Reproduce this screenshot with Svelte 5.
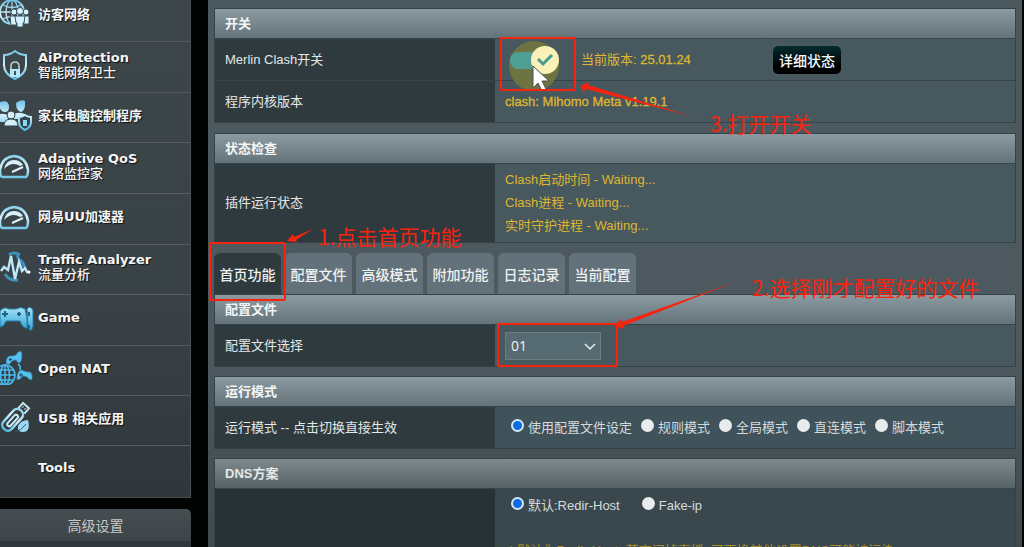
<script lang="ts">
  // Menu lateral
  const menu = [
    { icon: 'guest', title: '访客网络' },
    { icon: 'shield', title: 'AiProtection', sub: '智能网络卫士' },
    { icon: 'family', title: '家长电脑控制程序' },
    { icon: 'gauge', title: 'Adaptive QoS', sub: '网络监控家' },
    { icon: 'gauge', title: '网易UU加速器' },
    { icon: 'traffic', title: 'Traffic Analyzer', sub: '流量分析' },
    { icon: 'game', title: 'Game' },
    { icon: 'nat', title: 'Open NAT' },
    { icon: 'usb', title: 'USB 相关应用' },
    { icon: '', title: 'Tools' }
  ];

  const tabs = ['首页功能', '配置文件', '高级模式', '附加功能', '日志记录', '当前配置'];
  const modes = ['使用配置文件设定', '规则模式', '全局模式', '直连模式', '脚本模式'];
  const dnsModes = ['默认:Redir-Host', 'Fake-ip'];
  const status = ['Clash启动时间 - Waiting...', 'Clash进程 - Waiting...', '实时守护进程 - Waiting...'];

  let activeTab = $state('首页功能');
  let enabled = $state(true);
  let profile = $state('01');
  let mode = $state('使用配置文件设定');
  let dns = $state('默认:Redir-Host');
</script>

<div class="page">
  <aside>
    <nav class="menu">
      {#each menu as item}
        <a class="item" href="#menu">
          <svg class="icon" viewBox="0 0 34 34" fill="none" stroke="url(#ice)" stroke-width="2" aria-hidden="true">
            {#if item.icon === 'guest'}
              <circle cx="12" cy="14" r="12" />
              <path d="M12 2v24M0 14h24M3 7q9 5 18 0M3 21q9-5 18 0" stroke-width="1.3" />
              <ellipse cx="12" cy="14" rx="6" ry="12" stroke-width="1.3" />
              <g fill="#d6f1fb" stroke="#36535e" stroke-width="1">
                <circle cx="14" cy="14" r="3" /><path d="M10 18h7v9h-6z" />
                <circle cx="26" cy="14" r="3" /><path d="M23 18h6v8h-6z" />
                <circle cx="20" cy="13" r="3.5" /><path d="M15 18h10l-1 7h-1v4h-6v-4h-1z" />
              </g>
            {:else if item.icon === 'shield'}
              <path d="M15 3q5 4 11 4v10q0 9-11 14Q4 26 4 17V7q6 0 11-4z" />
              <path d="M11 22v-4q0-4 4-4t4 4v4" stroke="#b7cdd5" stroke-width="1.6" />
              <rect x="10" y="21" width="10" height="8" fill="#b9e6f7" stroke="none" />
              <path d="M15 23v4" stroke="#35525f" />
            {:else if item.icon === 'family'}
              <g fill="url(#ice)" stroke="none">
                <path d="M0 4q9-3 9 5 0 5-4 5T0 10zM16 5q5-4 9-2 1 9-4 11-5-1-5-9z" />
                <path d="M0 16q6-1 8 2v6H0zM14 16q7-3 12 1v4H14z" />
              </g>
              <g fill="#d5eef7" stroke="#35454c" stroke-width="1">
                <circle cx="11" cy="17" r="4" /><path d="M4 28q0-7 7-7t7 7z" />
              </g>
              <path d="M25 17q3 2 6 2v5q0 5-6 8-6-3-6-8v-5q3 0 6-2z" fill="#32444c" />
              <rect x="23" y="22" width="4" height="6" fill="#8ed8f6" stroke="none" />
            {:else if item.icon === 'gauge'}
              <path d="M2 28q-2-1-2-7Q2 8 14 7q12 1 14 14 0 6-2 7z" stroke-width="2.5" />
              <path d="M4 20Q6 11 14 11q6 0 9 5l-3 1q-8-5-16 3z" fill="#d5f0fa" stroke="none" />
              <path d="M12 23l11-5" stroke="#dff3fa" />
            {:else if item.icon === 'traffic'}
              <path d="M9 5q5-4 11 0M17 5l3 7M20 10q4 3 4 7M5 24q4 7 13 6" stroke="#3d91b8" stroke-width="3" />
              <path d="M1 21l3-4 4 3 3-14 4 23 4-17 3 9 3-3 2 4h2" stroke="#bde9fa" stroke-width="2.4" />
              <circle cx="29" cy="22" r="1.5" fill="#fff" stroke="none" />
            {:else if item.icon === 'game'}
              <path d="M0 10q4-5 9-2h7q5-3 9 0 3 9 2 19-4 1-7-7H6q-2 6-6 6z" fill="url(#game)" stroke="#247da5" stroke-width="1" />
              <path d="M27 8q3-4 6 1v17q-2 6-5 1z" fill="url(#game)" stroke="#247da5" stroke-width="1" />
              <path d="M5 10v6M2 13h6M19 11v4M17 13h4M29 11v4M29 24v4" stroke="#236482" />
            {:else if item.icon === 'nat'}
              <g stroke="#4ab9ec" stroke-width="1.6">
                <circle cx="5" cy="24" r="10" /><ellipse cx="5" cy="24" rx="4.5" ry="10" />
                <path d="M5 14v20M0 19h13M0 24h15M0 29h13M18 13q3 2 2 6" />
              </g>
              <g fill="#55bff0" stroke="#2b6f90" stroke-width="0.6">
                <path d="M7 7q2-3 5-2l4-1q1-3 4-4 2 0 2 4 0 6-2 8-3 0-4-3l-4 1q-2 4-5 4-2-3 0-7z" />
                <path d="M19 20q3-2 5 0l4 1q3-1 4 3 1 4-1 5-2 0-4-3l-4-1q-3 4-6 4-1-5 2-9z" />
              </g>
              <path d="M21 22v4M19 24h4M10 7v3M9 8.500h3" stroke="#31454e" stroke-width="1" />
            {:else if item.icon === 'usb'}
              <g transform="rotate(42 14 18)">
                <rect x="8" y="7" width="11" height="25" rx="5" stroke-width="2.5" />
                <path d="M10 7V0h8v7M12 3h1M15 3h1" stroke="#c6e4ee" />
                <rect x="12" y="13" width="4" height="14" rx="2" stroke="#c9eefb" />
              </g>
              <path d="M18 25q3-6 10-6 3 12-5 12-6 0-5-6z" fill="#99daf4" stroke="none" />
              <path d="M15 31q6-1 11-8" stroke="#3f5963" stroke-width="1" />
            {/if}
          </svg>
          <span class="label">
            <span>{item.title}</span>
            {#if item.sub}<span class="sub">{item.sub}</span>{/if}
          </span>
        </a>
      {/each}
    </nav>
    <h2 class="advanced">高级设置</h2>
    <div class="advanced-body"></div>
  </aside>

  <main>
    <section class="panel">
      <h3>开关</h3>
      <div class="row">
        <div class="name"><label for="clash-switch">Merlin Clash开关</label></div>
        <div class="value">
          <div class="switch">
            <input id="clash-switch" type="checkbox" bind:checked={enabled} />
            <svg viewBox="0 0 60 54" aria-hidden="true">
              <circle cx="29" cy="27" r="25" fill="#6d7442" />
              <rect x="5" y="13" width="34" height="17" rx="8" fill="#4e9e93" />
              <circle cx="40" cy="21" r="14" fill="#faf1b8" />
              <path d="M33 20l5 5 9-9" fill="none" stroke="#439b90" stroke-width="3" />
            </svg>
          </div>
          <span class="version">当前版本: <b>25.01.24</b></span>
          <button class="detail" type="button">详细状态</button>
        </div>
      </div>
      <div class="row">
        <div class="name">程序内核版本</div>
        <div class="value gold"><b>clash: Mihomo Meta v1.19.1</b></div>
      </div>
    </section>

    <section class="panel">
      <h3>状态检查</h3>
      <div class="row">
        <div class="name">插件运行状态</div>
        <div class="value status gold">
          {#each status as line}
            <span>{line}</span>
          {/each}
        </div>
      </div>
    </section>

    <div class="tabs" role="tablist">
      {#each tabs as tab}
        <button
          type="button"
          role="tab"
          aria-selected={activeTab === tab}
          class:active={activeTab === tab}
          onclick={() => (activeTab = tab)}>{tab}</button>
      {/each}
    </div>

    <section class="panel">
      <h3>配置文件</h3>
      <div class="row">
        <div class="name"><label for="profile">配置文件选择</label></div>
        <div class="value">
          <div class="select">
            <select id="profile" bind:value={profile}>
              <option value="01">01</option>
            </select>
            <svg viewBox="0 0 12 8" aria-hidden="true"><path d="M1 1l5 5 5-5" fill="none" stroke="#e8eeee" stroke-width="1.5" /></svg>
          </div>
        </div>
      </div>
    </section>

    <section class="panel">
      <h3>运行模式</h3>
      <div class="row lower">
        <div class="name">运行模式 -- 点击切换直接生效</div>
        <div class="value radios">
          {#each modes as m}
            <label><input type="radio" name="mode" value={m} bind:group={mode} /><span>{m}</span></label>
          {/each}
        </div>
      </div>
    </section>

    <section class="panel dim">
      <h3>DNS方案</h3>
      <div class="row">
        <div class="name"></div>
        <div class="value dns">
          <div class="radios wide">
            {#each dnsModes as d}
              <label><input type="radio" name="dns" value={d} bind:group={dns} /><span>{d}</span></label>
            {/each}
          </div>
          <p>&nbsp;* 默认为Redir-Host, 若夜间掉直播, 可更换其他设置DNS可能被污染</p>
        </div>
      </div>
    </section>
  </main>

  <!-- Tutorial marks drawn over the page -->
  <svg class="marks" viewBox="0 0 1024 547" width="1024" height="547" aria-hidden="true">
    <defs>
      <linearGradient id="ice" x1="0" y1="0" x2="0" y2="34" gradientUnits="userSpaceOnUse">
        <stop offset="0" stop-color="#5fbce6" />
        <stop offset="0.5" stop-color="#d3eff9" />
        <stop offset="1" stop-color="#45b5e6" />
      </linearGradient>
      <linearGradient id="game" x1="0" y1="0" x2="0" y2="1">
        <stop offset="0" stop-color="#a5e1f6" />
        <stop offset="1" stop-color="#37a8dc" />
      </linearGradient>
    </defs>
    <path d="M533 66v22l5-5 4 8 4-2-4-8h7z" fill="#fff" stroke="#4b5350" stroke-width="1" />
    <g fill="none" stroke="#f8230f" stroke-width="2">
      <rect x="501" y="38" width="74" height="52" rx="1" />
      <rect x="210" y="243" width="75" height="57" rx="1" />
      <rect x="498" y="324" width="119" height="42" rx="1" />
    </g>
    <g fill="#f8230f">
      <path d="M580 86l9-4-1 3 106 32-108-28-1 3z" />
      <path d="M287 241l6-7 1 3 19-8-17 11 1 2z" />
      <path d="M614 326l7-7 1 3 113-40-112 44 1 3z" />
    </g>
  </svg>
  <span class="note one">1.点击首页功能</span>
  <span class="note two">2.选择刚才配置好的文件</span>
  <span class="note three">3.打开开关</span>
</div>

<style>
  :global(body) {
    background: #000;
  }

  .page {
    position: relative;
    display: grid;
    grid-template-columns: 191px 1fr;
    column-gap: 17px;
    height: 100vh;
    overflow: hidden;
    padding-right: 2px;
    box-sizing: border-box;
    background: #020303;
    color: #e3e8e8;
    font: 13px/16px "Liberation Sans", "Noto Sans CJK SC", sans-serif;
  }

  h2,
  h3,
  p {
    margin: 0;
  }

  /* Sidebar */
  .menu {
    background: linear-gradient(#3d4649, #394246 60%, #30373a);
    border-right: 1px solid #4a5255;
    border-bottom: 1px solid #454d50;
  }

  .item {
    display: flex;
    align-items: center;
    gap: 4px;
    height: 51px;
    box-sizing: border-box;
    padding-bottom: 5px;
    border-bottom: 1px solid #555d60;
    color: #f4f6f6;
    font: bold 13px/15px "DejaVu Sans", "Noto Sans CJK SC", sans-serif;
    text-decoration: none;
    text-shadow: 1px 1px 1px #111;
  }

  .item:nth-child(3n),
  .item:nth-child(8) {
    height: 50px;
  }

  .item:first-child {
    height: 42px;
    padding-bottom: 12px;
  }

  .item:last-child {
    padding-bottom: 8px;
    border-bottom: 0;
  }

  .icon {
    flex: none;
    width: 34px;
    height: 34px;
  }

  .label {
    display: flex;
    flex-direction: column;
  }

  .sub {
    font-weight: 500;
  }

  .advanced {
    margin-top: 11px;
    border-radius: 0 5px 0 0;
    background: linear-gradient(#464e51, #3d4548);
    color: #c3c8c9;
    font: 14px/32px "Noto Sans CJK SC", sans-serif;
    text-align: center;
  }

  .advanced-body {
    height: 40px;
    background: #30383b;
  }

  /* Content */
  main {
    padding: 8px 6px 0;
    background: linear-gradient(#4b595e, #4d595f 60%, #3d464a);
  }

  .panel {
    margin-bottom: 10px;
    border: 1px solid #354248;
  }

  .tabs ~ .panel {
    margin-bottom: 9px;
  }

  h3 {
    padding-left: 10px;
    background: linear-gradient(#8c9ba1, #64727a);
    color: #f5f7f7;
    font: bold 13px/29px "Liberation Sans", "Noto Sans CJK SC", sans-serif;
  }

  .row {
    display: grid;
    grid-template-columns: 35% 1fr;
    min-height: 41px;
    border-top: 1px solid #35444a;
  }

  .name,
  .value {
    display: flex;
    align-items: center;
    padding-left: 10px;
  }

  .name {
    background: #2f3a3f;
  }

  .value {
    background: #47595f;
  }

  .gold,
  .version,
  .dns p {
    color: #dfb62f;
  }

  b {
    font-weight: 500;
    -webkit-text-stroke: 0.3px currentColor;
  }

  .switch {
    position: relative;
    width: 60px;
    height: 41px;
  }

  .switch input {
    position: absolute;
    inset: 0;
    width: 60px;
    height: 41px;
    margin: 0;
    opacity: 0;
  }

  .switch svg {
    position: absolute;
    top: 0;
    left: 0;
    width: 60px;
    height: 54px;
    pointer-events: none;
  }

  .version {
    width: 192px;
    padding-left: 16px;
    box-sizing: border-box;
    white-space: nowrap;
  }

  .version + .detail {
    margin-left: 16px;
  }

  .detail {
    height: 28px;
    padding: 0 6px;
    border: 0;
    border-radius: 5px;
    background: linear-gradient(#052b30, #000 75%);
    color: #f7f9f9;
    font: 500 14px/26px "Noto Sans CJK SC", sans-serif;
  }

  .status {
    flex-direction: column;
    align-items: flex-start;
    padding-top: 4px;
    padding-bottom: 5px;
    line-height: 23px;
  }

  .tabs {
    display: flex;
    gap: 4px;
  }

  .tabs button {
    width: 67px;
    height: 41px;
    padding: 0;
    border: 0;
    border-radius: 6px 6px 0 0;
    background: #63727a;
    color: #eef1f2;
    font: 500 14px/40px "Noto Sans CJK SC", sans-serif;
  }

  .tabs .active {
    background: #2f3a3f;
  }

  .select {
    position: relative;
  }

  select {
    appearance: none;
    width: 96px;
    height: 28px;
    padding: 0 5px;
    border: 1px solid #6b7d83;
    border-radius: 0;
    background: #566a72;
    color: #f0f3f3;
    font: 500 14px "Open Sans", sans-serif;
  }

  .select svg {
    position: absolute;
    top: 11px;
    right: 5px;
    width: 12px;
    height: 8px;
    pointer-events: none;
  }

  .radios {
    display: flex;
    gap: 9px;
    padding-left: 16px;
    color: #d5dcdd;
  }

  .lower .value {
    background: #40525a;
  }

  .wide {
    gap: 22px;
    padding-left: 6px;
  }

  .radios label {
    display: flex;
    align-items: flex-start;
    gap: 4px;
  }

  .radios span {
    padding-top: 1px;
  }

  input[type='radio'] {
    appearance: none;
    width: 13px;
    height: 13px;
    margin: 0;
    border-radius: 50%;
    background: #e9ecec;
  }

  input[type='radio']:checked {
    border: 2px solid #d3e6f6;
    background: #0c6be0;
  }

  .dim h3 {
    background: linear-gradient(#7f8a8e, #576268);
    color: #e4e8e8;
  }

  .dim .name {
    background: #283135;
  }

  .dns {
    flex-direction: column;
    align-items: flex-start;
    gap: 29px;
    min-height: 90px;
    box-sizing: border-box;
    padding-top: 8px;
    background: #3a484d;
  }

  .dns p {
    color: #a98b2c;
    white-space: nowrap;
  }

  /* Marks */
  .marks {
    position: absolute;
    top: 0;
    left: 0;
    pointer-events: none;
  }

  .note {
    position: absolute;
    color: #f8230f;
    font: 400 21px/28px "Noto Sans CJK SC", sans-serif;
    white-space: nowrap;
  }

  .one {
    top: 222px;
    left: 318px;
  }

  .two {
    top: 273px;
    left: 752px;
  }

  .three {
    top: 109px;
    left: 710px;
  }
</style>
